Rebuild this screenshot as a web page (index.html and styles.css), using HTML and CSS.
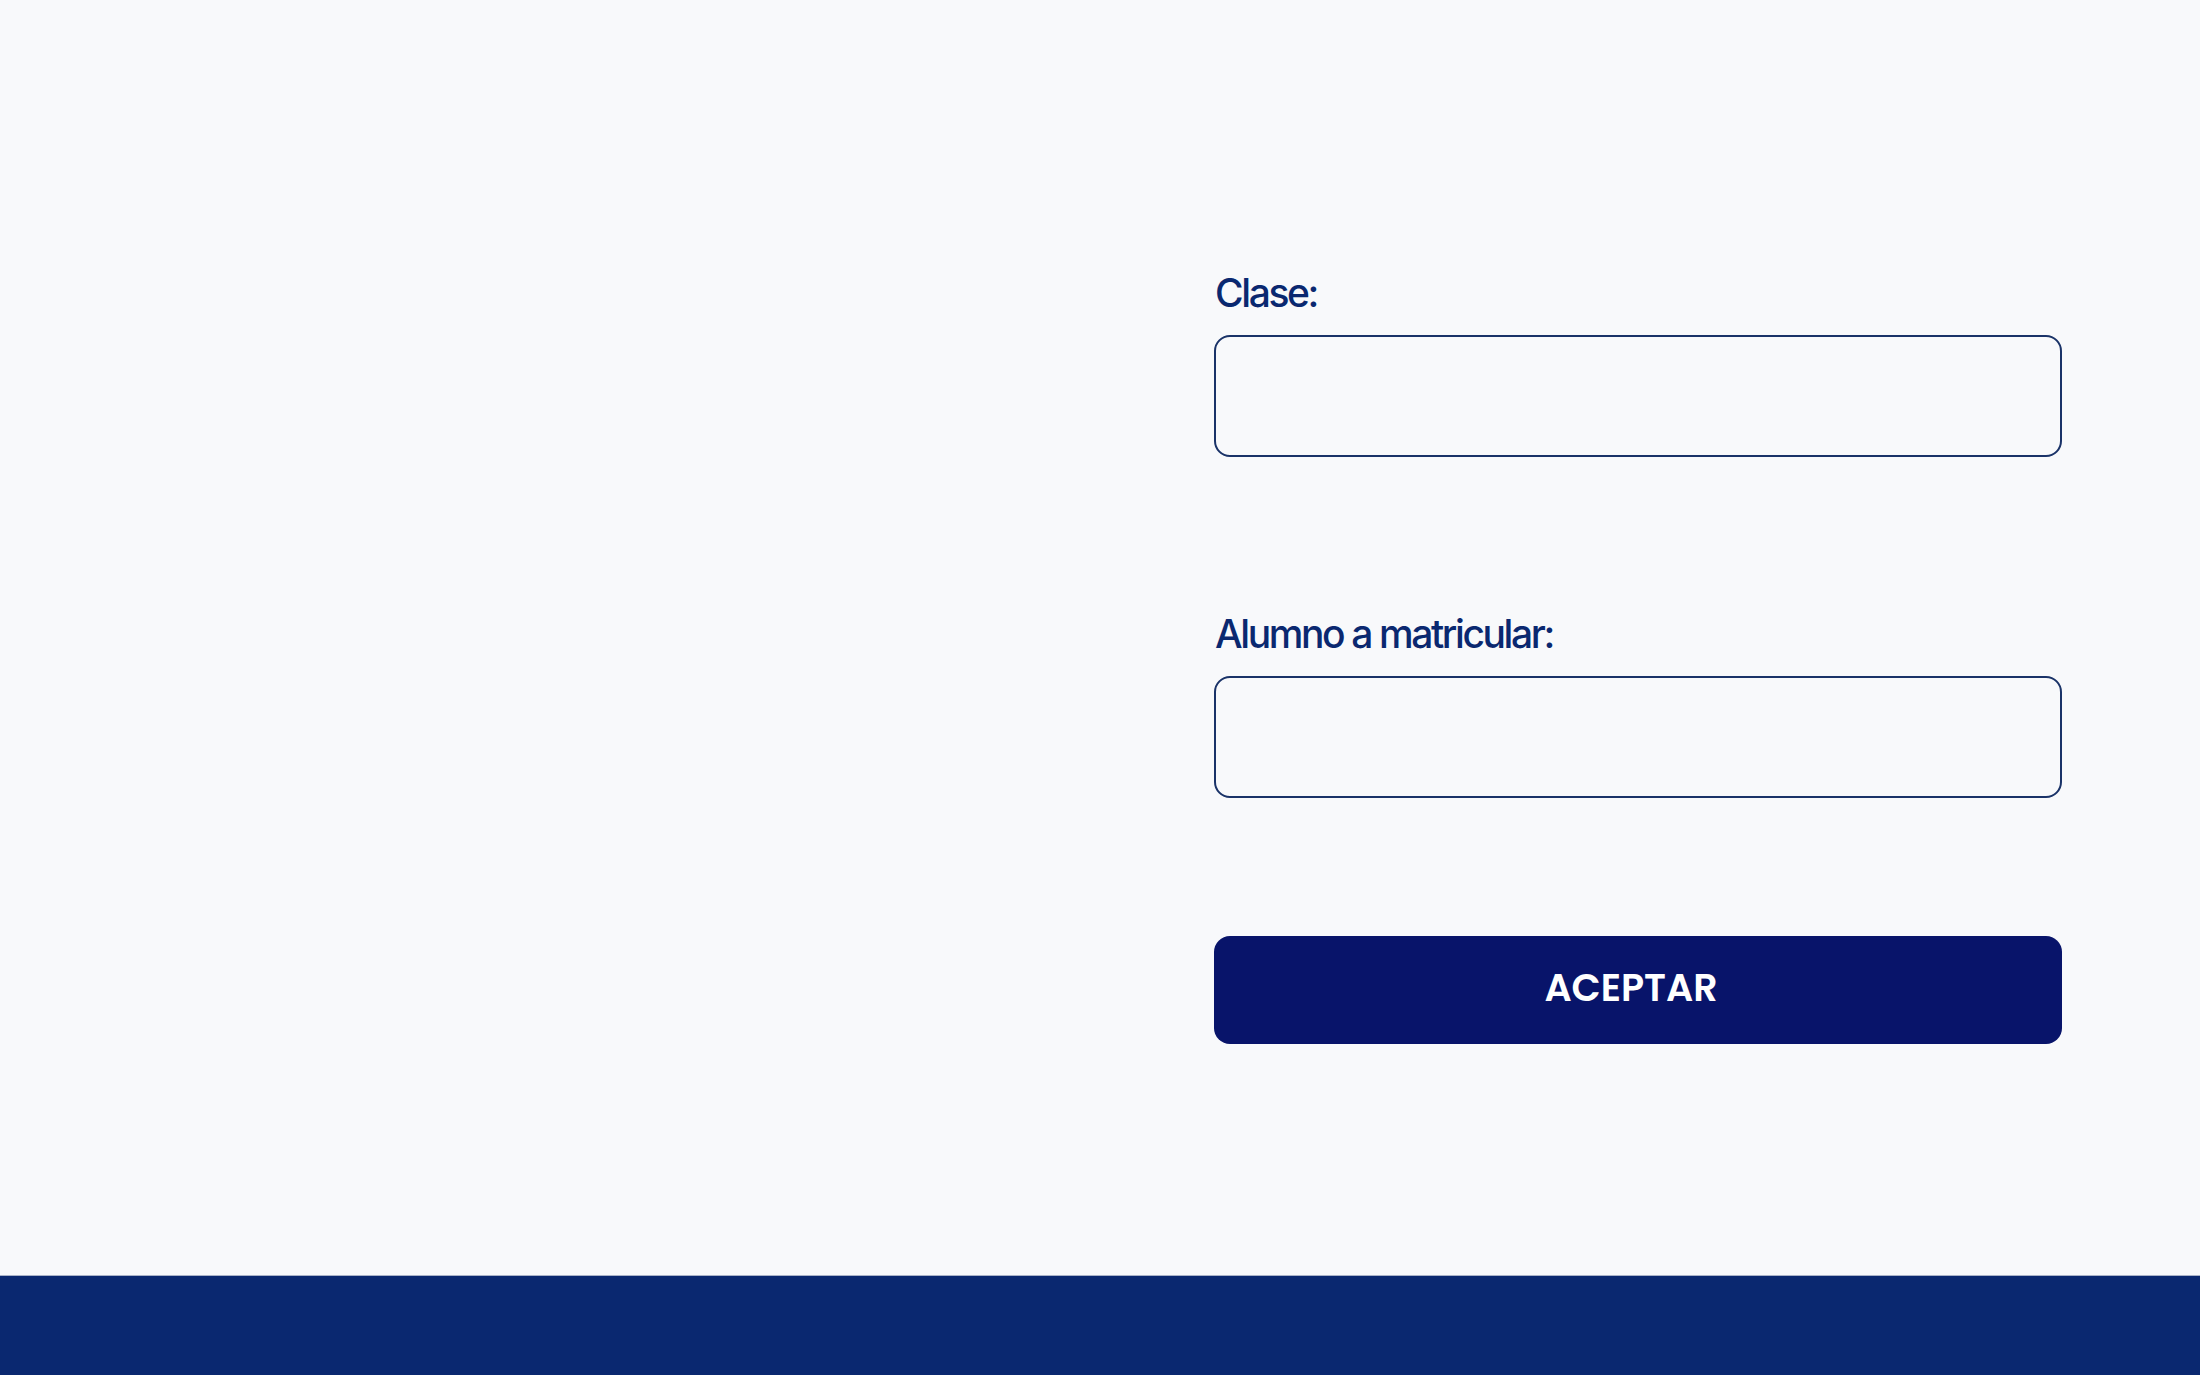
FILE: index.html
```html
<!DOCTYPE html>
<html lang="es">
<head>
<meta charset="utf-8">
<title>Matricular alumno</title>
<link rel="stylesheet" href="styles.css">
</head>
<body>
<main class="page">
  <div class="left"></div>
  <form class="form">
    <div class="field">
      <label class="label" for="clase">Clase:</label>
      <input class="input" id="clase" type="text">
    </div>
    <div class="field field-second">
      <label class="label" for="alumno">Alumno a matricular:</label>
      <input class="input" id="alumno" type="text">
    </div>
    <button class="button" type="button">ACEPTAR</button>
  </form>
</main>
<footer class="footer"></footer>
</body>
</html>
```
FILE: styles.css
```css
* { box-sizing: border-box; }
html, body { margin: 0; padding: 0; }
body {
  background: #f8f9fb;
  font-family: Inter, "Liberation Sans", sans-serif;
  width: 2200px;
  height: 1375px;
  overflow: hidden;
}
.page {
  height: 1275px;
  display: grid;
  grid-template-columns: 1214px 848px;
}
.form {
  display: flex;
  flex-direction: column;
  padding-top: 266px;
}
.field {
  display: flex;
  flex-direction: column;
}
.field-second { margin-top: 150px; }
.label {
  font-size: 39px;
  line-height: 48px;
  padding-top: 3px;
  color: #0a2870;
  font-weight: 500;
  letter-spacing: -2.4px;
  margin-left: 1px;
}
.input {
  margin-top: 18px;
  height: 122px;
  border: 2px solid #1a3368;
  border-radius: 16px;
  background: #f8f9fb;
  outline: none;
}
.button {
  margin-top: 138px;
  height: 108px;
  border: none;
  border-radius: 16px;
  background: #08146a;
  color: #ffffff;
  font-family: Poppins, Inter, "Liberation Sans", sans-serif;
  font-weight: 600;
  font-size: 38px;
  letter-spacing: 0;
  padding: 0 14px 6px 0;
}
.footer {
  height: 100px;
  background: #0a2870;
  border-top: 1px solid #aab3c8;
}
```
